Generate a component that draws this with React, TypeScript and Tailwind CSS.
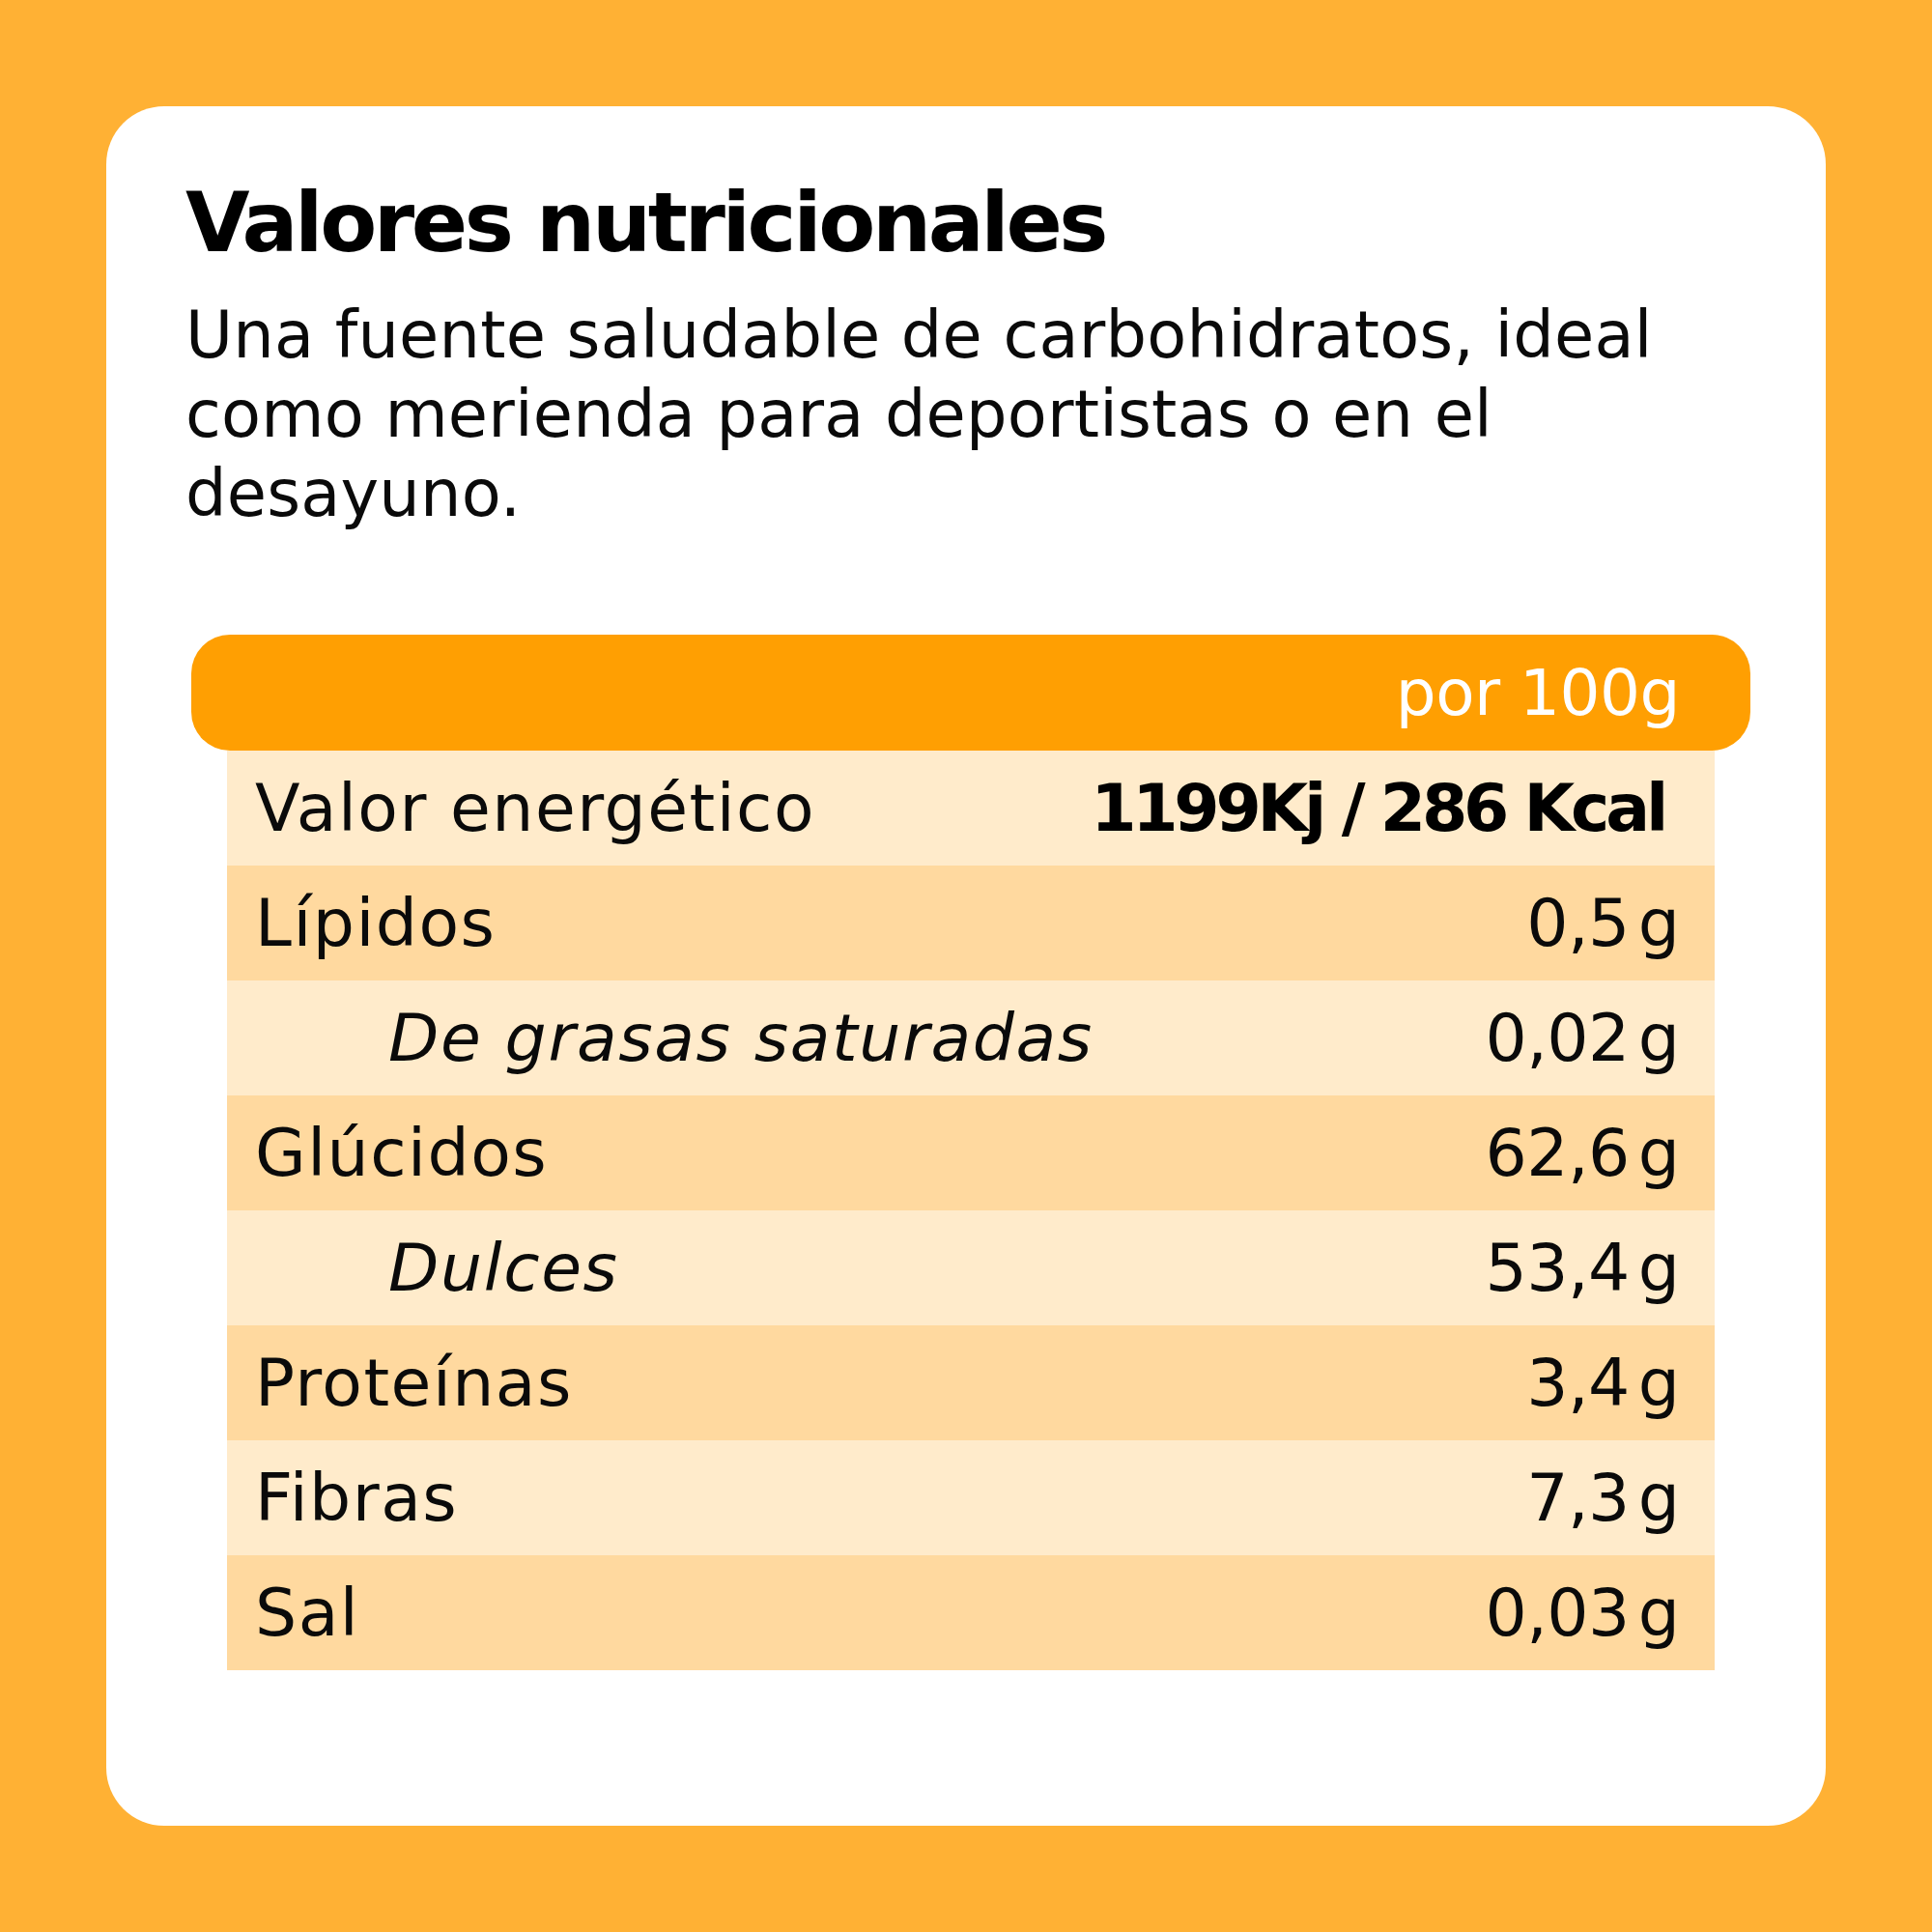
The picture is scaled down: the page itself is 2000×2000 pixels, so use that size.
type Row = {
  label: string;
  value: string;
  unit?: string;
  sub?: boolean;
  bold?: boolean;
};

const rows: Row[] = [
  { label: "Valor energético", value: "1199Kj / 286 Kcal", bold: true },
  { label: "Lípidos", value: "0,5", unit: "g" },
  { label: "De grasas saturadas", value: "0,02", unit: "g", sub: true },
  { label: "Glúcidos", value: "62,6", unit: "g" },
  { label: "Dulces", value: "53,4", unit: "g", sub: true },
  { label: "Proteínas", value: "3,4", unit: "g" },
  { label: "Fibras", value: "7,3", unit: "g" },
  { label: "Sal", value: "0,03", unit: "g" },
];

export default function App() {
  return (
    <div
      className="w-[2000px] h-[2000px] bg-[#ffb134] p-[110px] text-[#0a0a0a]"
      style={{ fontFamily: '"DejaVu Sans", "Noto Sans", sans-serif' }}
    >
      <div className="w-[1780px] h-[1780px] rounded-[60px] bg-white pt-[77px] pl-[82px] pr-[80px]">
        {/* Heading */}
        <h1 className="text-[86px] leading-[86px] font-bold tracking-[-3.4px] text-black">
          Valores nutricionales
        </h1>
        <p className="mt-[33px] w-[1560px] text-[67px] leading-[82px] tracking-[0.2px]">
          Una fuente saludable de carbohidratos, ideal
          <br />
          como merienda para deportistas o en el
          <br />
          desayuno.
        </p>

        {/* Table */}
        <div className="mt-[105px] ml-[6px] w-[1614px]">
          <div className="h-[120px] rounded-[40px] bg-[#ff9f02] flex items-center justify-end pr-[73px]">
            <span className="text-[66px] text-white tracking-[-0.5px]">por 100g</span>
          </div>
          <div className="mx-[37px]">
            {rows.map((r, i) => (
              <div
                key={r.label}
                className={`h-[119px] flex items-center justify-between pl-[29px] pr-[36px] text-[68px] ${
                  i % 2 === 0 ? "bg-[#ffebcb]" : "bg-[#ffd99f]"
                }`}
              >
                <span
                  className={r.sub ? "italic pl-[138px] tracking-[1.6px]" : "tracking-[1.5px]"}
                >
                  {r.label}
                </span>
                {r.bold ? (
                  <span className="font-bold tracking-[-4.2px] pr-[16px] text-black">
                    {r.value}
                  </span>
                ) : (
                  <span>
                    <span className="tracking-[-0.5px]">{r.value}</span>
                    <span className="ml-[9px]">{r.unit}</span>
                  </span>
                )}
              </div>
            ))}
          </div>
        </div>
      </div>
    </div>
  );
}
